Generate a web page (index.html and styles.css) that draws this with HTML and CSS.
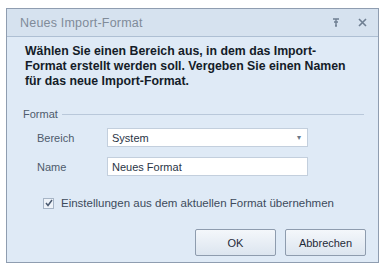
FILE: index.html
```html
<!DOCTYPE html>
<html>
<head>
<meta charset="utf-8">
<link rel="stylesheet" href="styles.css">
</head>
<body>
<div class="dialog">
  <div class="titlebar">
    <span class="title">Neues Import-Format</span>
    <span class="tb-icons">
      <svg class="tb-help" width="8" height="9" viewBox="0 0 8 9"><path d="M1 1h6M4 1v3M2 4h4M4 4v2M3 7h2M4 7v2" stroke="#6f7f92" stroke-width="1.4" fill="none"/></svg>
      <svg class="tb-close" width="9" height="9" viewBox="0 0 9 9"><path d="M1 1l7 7M8 1l-7 7" stroke="#6f7f92" stroke-width="1.6" fill="none"/></svg>
    </span>
  </div>
  <div class="content">
    <p class="intro">Wählen Sie einen Bereich aus, in dem das Import-<br>Format erstellt werden soll. Vergeben Sie einen Namen<br>für das neue Import-Format.</p>
    <div class="group">
      <div class="group-head"><span>Format</span><span class="rule"></span></div>
      <div class="row"><span class="lbl">Bereich</span><div class="field select"><span>System</span><span class="caret">▾</span></div></div>
      <div class="row"><span class="lbl">Name</span><div class="field"><span>Neues Format</span></div></div>
    </div>
    <label class="check"><span class="box"><svg width="8" height="8" viewBox="0 0 8 8"><path d="M1 4l2 2.5L7 1" stroke="#4a5a70" stroke-width="1.5" fill="none"/></svg></span><span>Einstellungen aus dem aktuellen Format übernehmen</span></label>
    <div class="buttons">
      <button class="btn">OK</button>
      <button class="btn">Abbrechen</button>
    </div>
  </div>
</div>
</body>
</html>
```
FILE: styles.css
```css
html, body { margin: 0; padding: 0; background: #ffffff; }
body { font-family: "Liberation Sans", Arial, sans-serif; color: #1f2a38; }
.dialog {
  margin: 8px 0 0 6px;
  width: 371px;
  height: 253px;
  border: 1px solid #8f9db0;
  background: #dfeaf6;
  display: flex;
  flex-direction: column;
}
.titlebar {
  height: 28px;
  background: #d6e2ef;
  border-bottom: 1px solid #aebfd3;
  display: flex;
  align-items: center;
  justify-content: space-between;
  padding: 0 11px 0 13px;
  box-sizing: border-box;
}
.title { font-size: 12.5px; color: #808b99; letter-spacing: 0.2px; }
.tb-icons { display: flex; align-items: center; gap: 18px; }
.content { padding: 7px 14px 0 18px; display: flex; flex-direction: column; }
.intro {
  margin: 0;
  font-size: 12.3px;
  font-weight: bold;
  line-height: 15px;
  color: #141c28;
  white-space: nowrap;
}
.group { margin-top: 19px; }
.group-head { display: flex; align-items: center; gap: 4px; font-size: 11px; color: #4e5b6c; margin-left: -2px; }
.rule { flex: 1; height: 1px; background: #b9c8da; margin-right: 0; }
.row { display: flex; align-items: center; margin-top: 8px; }
.row + .row { margin-top: 10px; }
.lbl { width: 70px; padding-left: 12px; font-size: 11px; color: #4e5b6c; }
.field {
  width: 189px;
  height: 17px;
  background: #ffffff;
  border: 1px solid #c3cfdd;
  display: flex;
  align-items: center;
  justify-content: space-between;
  padding: 0 6px 0 4px;
  box-sizing: content-box;
  font-size: 11px;
  color: #2a3546;
}
.caret { font-size: 8px; color: #6a7889; }
.check { display: flex; align-items: center; gap: 7px; margin-top: 21px; margin-left: 18px; font-size: 11.5px; color: #3d4a5c; }
.box {
  width: 9px; height: 9px;
  border: 1px solid #a7b5c6;
  background: #eef3f9;
  display: flex; align-items: center; justify-content: center;
}
.buttons { display: flex; justify-content: flex-end; gap: 9px; margin-top: 20px; margin-right: -2px; }
.btn {
  width: 81px; height: 27px;
  border: 1px solid #8e9cae;
  border-radius: 2px;
  background: linear-gradient(#f4f7fb, #dce5ef);
  font-family: "Liberation Sans", Arial, sans-serif;
  font-size: 11px;
  color: #1f2a38;
  padding: 0;
}
```
